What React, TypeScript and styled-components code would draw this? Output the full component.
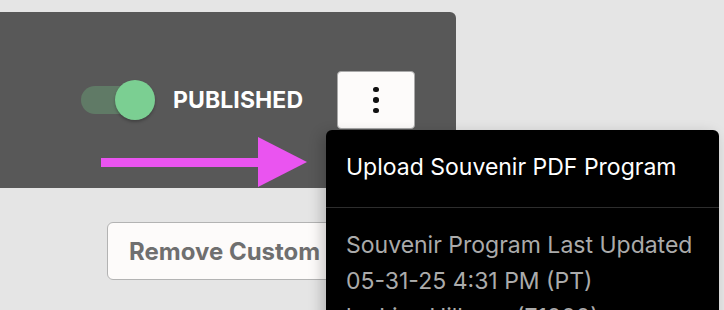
import React from "react";
import styled, { createGlobalStyle } from "styled-components";

const Global = createGlobalStyle`
  html, body { margin: 0; padding: 0; background: #e5e5e5; }
  body { font-family: "Inter", "Noto Sans", sans-serif; }
`;

const Page = styled.div`
  position: relative;
  width: 724px;
  height: 310px;
  overflow: hidden;
  background: #e5e5e5;
  padding-top: 12px;
  box-sizing: border-box;
`;

const Card = styled.div`
  width: 456px;
  height: 176px;
  background: #585858;
  border-radius: 0 6px 6px 0;
  box-sizing: border-box;
  padding: 59px 0 0 81px;
`;

const Row = styled.div`
  display: flex;
  align-items: center;
`;

const Switch = styled.div`
  position: relative;
  width: 74px;
  height: 40px;
  flex: none;
`;

const Track = styled.div`
  position: absolute;
  left: 0;
  top: 6px;
  width: 68px;
  height: 28px;
  border-radius: 14px;
  background: #607a66;
`;

const Knob = styled.div`
  position: absolute;
  right: 0;
  top: 0;
  width: 40px;
  height: 40px;
  border-radius: 50%;
  background: #7bcf92;
  box-shadow: 0 2px 3px rgba(0, 0, 0, 0.25);
`;

const Label = styled.span`
  margin-left: 18px;
  color: #ffffff;
  font-weight: 700;
  font-size: 23px;
  letter-spacing: 0.1px;
`;

const KebabButton = styled.button`
  margin-left: 34px;
  width: 78px;
  height: 58px;
  background: #fdfbfa;
  border: 1px solid #a9a9a9;
  border-radius: 4px;
  display: flex;
  flex-direction: column;
  align-items: center;
  justify-content: center;
  gap: 5px;
  padding: 0;
`;

const Dot = styled.span`
  width: 5.5px;
  height: 5.5px;
  border-radius: 50%;
  background: #111;
`;

const RemoveButton = styled.button`
  margin: 34px 0 0 107px;
  height: 58px;
  padding: 0 21px;
  background: #fdfbfa;
  border: 1.5px solid #b3b3b3;
  border-radius: 6px;
  color: #6f6f6f;
  font-family: "Inter", "Noto Sans", sans-serif;
  font-weight: 700;
  font-size: 24px;
  white-space: nowrap;
`;

const Arrow = styled.svg`
  position: absolute;
  left: 101px;
  top: 137px;
`;

const Menu = styled.div`
  position: absolute;
  left: 326px;
  top: 130px;
  width: 393px;
  height: 220px;
  background: #000;
  border-radius: 6px;
  box-shadow: -4px 4px 14px rgba(0, 0, 0, 0.22);
`;

const MenuItem = styled.div`
  padding: 23px 20px 26px;
  color: #fff;
  font-size: 23px;
  line-height: 28px;
  white-space: nowrap;
  border-bottom: 1px solid #2d2d2d;
`;

const Info = styled.div`
  padding: 19px 20px 0;
  color: #ababab;
  font-size: 23px;
  line-height: 36px;
  white-space: nowrap;
`;

export default function App() {
  return (
    <Page>
      <Global />
      <Card>
        <Row>
          <Switch>
            <Track />
            <Knob />
          </Switch>
          <Label>PUBLISHED</Label>
          <KebabButton aria-label="More options">
            <Dot />
            <Dot />
            <Dot />
          </KebabButton>
        </Row>
      </Card>
      <RemoveButton>Remove Custom Program</RemoveButton>
      <Arrow width="207" height="51" viewBox="0 0 207 51">
        <rect x="0" y="21" width="160" height="9" fill="#ea54f0" />
        <polygon points="157,0 206,25 157,50" fill="#ea54f0" />
      </Arrow>
      <Menu>
        <MenuItem>Upload Souvenir PDF Program</MenuItem>
        <Info>
          Souvenir Program Last Updated
          <br />
          05-31-25 4:31 PM (PT)
          <br />
          by Lisa Hillman (71000)
        </Info>
      </Menu>
    </Page>
  );
}
